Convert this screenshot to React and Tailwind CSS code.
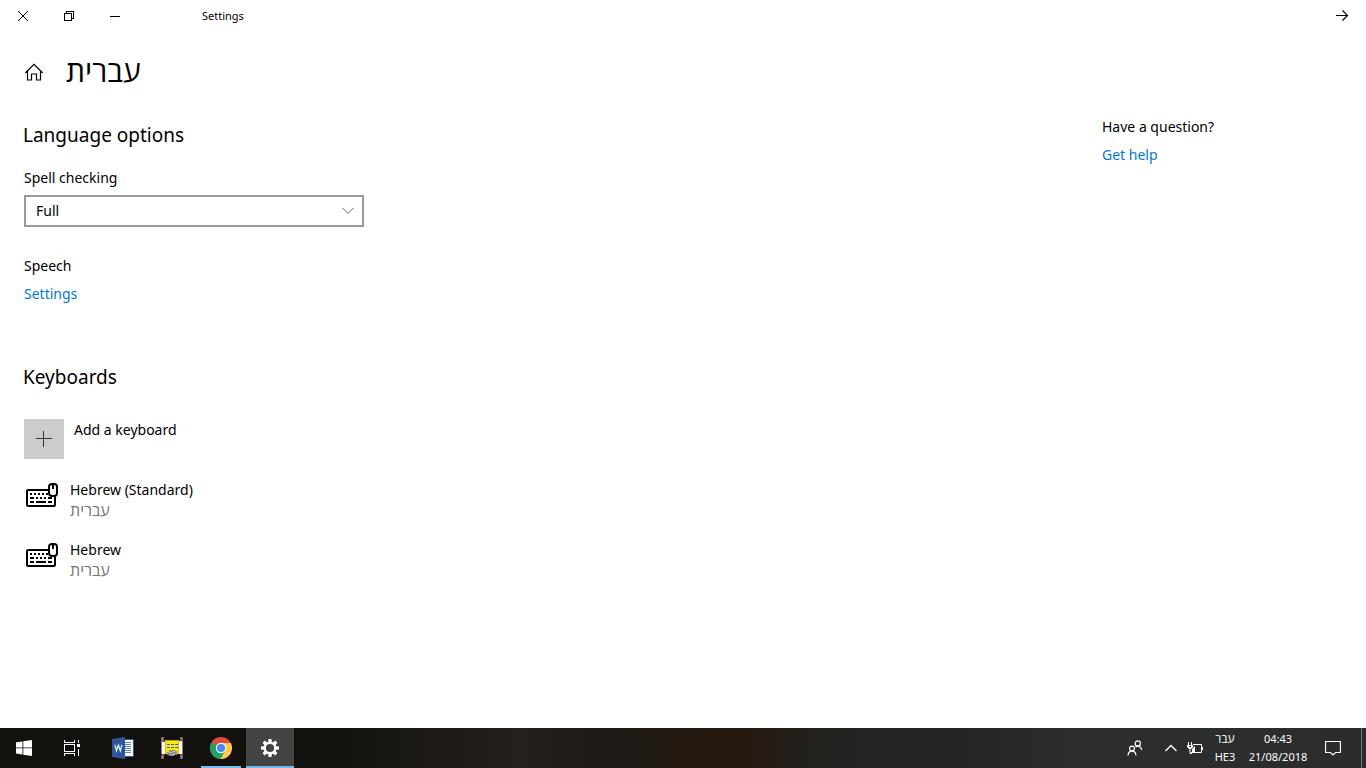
const strings = {
  hebrew: 'עברית',
}

const keyboards = [
  { name: 'Hebrew (Standard)', language: strings.hebrew },
  { name: 'Hebrew', language: strings.hebrew },
]

/* ---------- window icons ---------- */

function CloseIcon() {
  return (
    <svg width="12" height="12" viewBox="0 0 12 12" fill="none" stroke="currentColor">
      <path d="M1 1l10 10M11 1L1 11" />
    </svg>
  )
}

function RestoreIcon() {
  return (
    <svg width="10" height="10" viewBox="0 0 10 10" fill="none" stroke="currentColor" shapeRendering="crispEdges">
      <path d="M.5 2.5h7v7h-7zM2.5 2.5v-2h7v7h-2" />
    </svg>
  )
}

function MinimizeIcon() {
  return (
    <svg width="10" height="10" viewBox="0 0 10 10" fill="none" stroke="currentColor" shapeRendering="crispEdges">
      <path d="M0 5.5h10" />
    </svg>
  )
}

function ArrowIcon() {
  return (
    <svg width="14" height="12" viewBox="0 0 14 12" fill="none" stroke="currentColor" strokeWidth="1.2">
      <path d="M1 5.5h11.500M7.500.5l5 5-5 5" />
    </svg>
  )
}

function HomeIcon() {
  return (
    <svg width="20" height="20" viewBox="0 0 20 20" fill="none" stroke="currentColor" strokeWidth="1.2">
      <path d="M1.3 11L10 2.400l8.700 8.600" />
      <path d="M3.500 9v9h4v-6h5v6h4V9" />
    </svg>
  )
}

function KeyboardIcon() {
  return (
    <svg width="32" height="24" viewBox="0 0 32 24" fill="none" stroke="currentColor" strokeWidth="2">
      <rect x="1" y="7" width="28" height="16" rx="1" />
      <path d="M4 11h18" strokeDasharray="2 2" />
      <path d="M4 15h4M10 15h2M14 15h2M18 15h2M22 15h4M4 19h4M10 19h10M22 19h4" />
      <rect x="23" y="1" width="8" height="12" rx="3" fill="white" />
      <path d="M27 1v5" />
    </svg>
  )
}

/* ---------- taskbar icons ---------- */

function WindowsIcon() {
  return (
    <svg width="16" height="16" viewBox="0 0 16 16" fill="white">
      <path d="M0 2.3l6.5-.9v6.1H0zM7.3 1.3L16 0v7.5H7.3zM0 8.3h6.5v6.2L0 13.6zM7.3 8.3H16V16l-8.7-1.3z" />
    </svg>
  )
}

function TaskViewIcon() {
  return (
    <svg width="16" height="16" viewBox="0 0 16 16" fill="none" stroke="white" shapeRendering="crispEdges">
      <path d="M.5 0v2.5h10V0M.5 16v-2.5h10V16M.5 4.5h10v7H.5zM14.5 0v3M14.5 9v7" />
      <path d="M13 4h3v3h-3z" fill="white" stroke="none" />
    </svg>
  )
}

function WordIcon() {
  return (
    <svg width="22" height="22" viewBox="0 0 22 22">
      <path d="M12 2.500h9.500v17H12z" fill="white" stroke="#2b579a" />
      <path d="M13 5.500h6M13 7.500h6M13 9.500h6M13 11.500h6M13 13.500h6M13 15.500h6" stroke="#5b87c5" />
      <path d="M0 2L13 0v22L0 20z" fill="#2b579a" />
      <path d="M3 7.800l1.500 6 1.900-5.600 1.900 5.600 1.600-6" fill="none" stroke="#e6edf7" strokeWidth="1.300" />
    </svg>
  )
}

function ScrollIcon() {
  return (
    <svg width="24" height="24" viewBox="0 0 24 24" shapeRendering="crispEdges">
      <path d="M5 4h14v14H5z" fill="#f4ee10" />
      <path d="M6 4h12v1H6z" fill="#a79a1c" />
      <path d="M7 8.500h3M11 8.500h3M15 8.500h3M7 11.500h3M11 11.500h3M15 11.500h3" stroke="#55558c" />
      <path d="M2 5h3v13H2zM19 5h3v13h-3z" fill="#f8f8ec" />
      <path d="M5 5h1v13H5zM18 5h1v13h-1z" fill="#c9bc14" />
      <path d="M1 5h1v13H1zM22 5h1v13h-1z" fill="#8d8479" />
      <path d="M2 5.500h3M20 4.500h3M2 18.500h3M20 18.500h3" stroke="#b8323a" />
      <path d="M1 1h3v4H1zM20 1h3v3h-3zM1 19h3v4H1zM20 19h3v4h-3z" fill="#716863" />
      <path d="M2 2h1v2H2zM21 2h1v1h-1zM2 20h1v2H2zM21 20h1v2h-1z" fill="#a39b95" />
      <path d="M9 14h6v1h2v4h-3v1H9v-1H7v-3h2z" fill="#8f8f8f" />
      <path d="M9 16.500h3M13 15.500h2M12 18.500h3" stroke="#bdbdbd" />
    </svg>
  )
}

function ChromeIcon() {
  return (
    <svg width="22" height="22" viewBox="0 0 22 22">
      <circle cx="11" cy="11" r="11" fill="#dd4b3e" />
      <path d="M11 11L1.500 5.500A11 11 0 0 0 10.500 22l5-8.500z" fill="#1da462" />
      <path d="M11 6h9.800A11 11 0 0 1 10.500 22l4.900-8.500z" fill="#ffcd46" />
      <circle cx="11" cy="11" r="5.200" fill="white" />
      <circle cx="11" cy="11" r="4.100" fill="#4688f4" />
    </svg>
  )
}

function GearIcon() {
  const teeth = [0, 45, 90, 135, 180, 225, 270, 315]
  return (
    <svg width="18" height="18" viewBox="0 0 18 18" fill="white">
      {teeth.map((angle) => (
        <path key={angle} d="M7.500 0h3l.5 4H7z" transform={`rotate(${angle} 9 9)`} />
      ))}
      <circle cx="9" cy="9" r="5.200" fill="none" stroke="white" strokeWidth="2.200" />
    </svg>
  )
}

function PeopleIcon() {
  return (
    <svg width="16" height="16" viewBox="0 0 16 16" fill="none" stroke="white" strokeWidth="1.200">
      <circle cx="10.800" cy="3.500" r="2.600" />
      <path d="M8.500 7c2.500-1.800 5.800-.5 6.200 3" />
      <circle cx="5" cy="8.500" r="2.400" />
      <path d="M1 15.500c.4-5.800 7.600-5.800 8 0" />
    </svg>
  )
}

function ChevronUpIcon() {
  return (
    <svg width="12" height="8" viewBox="0 0 12 8" fill="none" stroke="white" strokeWidth="1.300">
      <path d="M.5 7L6 1.500 11.500 7" />
    </svg>
  )
}

function BatteryIcon() {
  return (
    <svg width="16" height="12" viewBox="0 0 16 12" fill="none" stroke="white">
      <path d="M6 2.500h8.500v8H4M15.500 5v3" />
      <path d="M5 9V7l3-3v6H5z" fill="white" stroke="none" />
      <path d="M1.500 0v3M4.500 0v3M3 7v4.500h2" />
      <path d="M0 3h6v2L4 7H2L0 5z" fill="white" stroke="none" />
      <path d="M2 4.500h2" stroke="#2c2d2d" />
    </svg>
  )
}

function ActionCenterIcon() {
  return (
    <svg width="16" height="16" viewBox="0 0 16 16" fill="none" stroke="white" strokeWidth="1.100">
      <path d="M.6 1.500h14.800v11h-4.900L8 15l-2.500-2.500H.6z" />
    </svg>
  )
}

/* ---------- layout ---------- */

function TitleBar() {
  const buttons = [
    { label: 'Close', icon: <CloseIcon /> },
    { label: 'Restore', icon: <RestoreIcon /> },
    { label: 'Minimize', icon: <MinimizeIcon /> },
  ]
  return (
    <div className="h-8 flex items-center shrink-0">
      {buttons.map((b) => (
        <button key={b.label} aria-label={b.label} className="w-[46px] h-8 flex items-center justify-center">
          {b.icon}
        </button>
      ))}
      <span className="pl-16 pt-px text-[11px]">Settings</span>
      <button aria-label="Back" className="ml-auto w-12 h-8 flex items-center justify-center">
        <ArrowIcon />
      </button>
    </div>
  )
}

function KeyboardRow({ name, language }) {
  return (
    <li className="flex gap-3 pl-0.5">
      <div className="pt-[3px]">
        <KeyboardIcon />
      </div>
      <div className="leading-5">
        <div>{name}</div>
        <div className="text-[#767676] text-[16px] leading-5">{language}</div>
      </div>
    </li>
  )
}

function TaskButton({ label, active, running, children }) {
  return (
    <button
      aria-label={label}
      className={`relative w-12 h-10 flex items-center justify-center ${active ? 'bg-[#434343]' : ''}`}
    >
      {children}
      {active && <span className="absolute bottom-0 inset-x-0 h-0.5 bg-[#76b9ed]" />}
      {running && <span className="absolute bottom-0 inset-x-1 h-0.5 bg-[#76b9ed]" />}
    </button>
  )
}

function Taskbar() {
  return (
    <footer className="h-10 shrink-0 flex justify-between text-white text-[11px] leading-[18px] bg-[linear-gradient(90deg,#12110d_0%,#12110d_23%,#24201d_38%,#1e1b17_44%,#26190f_54%,#22221f_60%,#242525_70%,#2c2e2e_80%,#2b2b2b_100%)]">
      <div className="flex">
        <TaskButton label="Start"><WindowsIcon /></TaskButton>
        <TaskButton label="Task View"><TaskViewIcon /></TaskButton>
        <div className="flex gap-px pl-[3px]">
          <TaskButton label="Word"><WordIcon /></TaskButton>
          <TaskButton label="Scroll"><ScrollIcon /></TaskButton>
          <TaskButton label="Chrome" running><ChromeIcon /></TaskButton>
          <TaskButton label="Settings" active><GearIcon /></TaskButton>
        </div>
      </div>
      <div className="flex">
        <button aria-label="People" className="w-12 flex items-center justify-center"><PeopleIcon /></button>
        <button aria-label="Show hidden icons" className="w-6 flex items-center justify-center"><ChevronUpIcon /></button>
        <button aria-label="Battery" className="w-6 flex items-center justify-center"><BatteryIcon /></button>
        <button className="w-9 flex flex-col items-center justify-center">
          <span className="text-[12px] leading-[18px]">עבר</span>
          <span>HE3</span>
        </button>
        <button className="w-[70px] flex flex-col items-center justify-center whitespace-nowrap">
          <span>04:43</span>
          <span>21/08/2018</span>
        </button>
        <button aria-label="Action center" className="w-12 flex items-center justify-center pr-5 pl-3">
          <ActionCenterIcon />
        </button>
        <button aria-label="Show desktop" className="w-[5px] border-l border-[#757575]" />
      </div>
    </footer>
  )
}

export default function App() {
  return (
    <div className="min-h-screen flex flex-col bg-white text-black text-[14px] font-['Segoe_UI','Noto_Sans','Open_Sans','DejaVu_Sans',sans-serif]">
      <TitleBar />

      <header className="flex items-center gap-[22px] pl-6 pt-5">
        <a href="#home" aria-label="Home"><HomeIcon /></a>
        <h1 className="text-[30px] leading-[38px] pb-0.5">{strings.hebrew}</h1>
      </header>

      <main className="flex-1 flex justify-between pl-[23px]">
        <div className="w-[341px]">
          <h2 className="pt-7 text-[19px] leading-[30px]">Language options</h2>

          <div className="pl-px">
            <label htmlFor="spelling" className="block pt-[18px] leading-5">Spell checking</label>
            <div className="relative mt-[7px]">
              <select
                id="spelling"
                className="block w-full h-8 appearance-none border-2 border-[#999999] bg-white pl-2.5 pr-8 pb-0.5 text-[14px]"
              >
                <option>Full</option>
                <option>Basic</option>
                <option>Off</option>
              </select>
              <svg
                className="absolute right-2.5 top-3 pointer-events-none text-[#666666]"
                width="12" height="8" viewBox="0 0 12 8" fill="none" stroke="currentColor"
              >
                <path d="M.5 1L6 6.500 11.500 1" />
              </svg>
            </div>

            <div className="pt-[29px] leading-5">Speech</div>
            <a href="#speech" className="block mt-2 leading-5 text-[#0078d7]">Settings</a>
          </div>

          <h2 className="pt-[58px] text-[19px] leading-[30px]">Keyboards</h2>

          <div className="pl-px">
            <button className="mt-[27px] flex gap-2.5 text-left">
              <span className="w-10 h-10 flex items-center justify-center bg-[#cccccc]">
                <svg width="16" height="16" viewBox="0 0 16 16" stroke="#333333" shapeRendering="crispEdges">
                  <path d="M0 7.500h16M7.500 0v16" />
                </svg>
              </span>
              <span className="pt-px leading-5">Add a keyboard</span>
            </button>

            <ul className="pt-[21px] flex flex-col gap-5">
              {keyboards.map((k) => (
                <KeyboardRow key={k.name} {...k} />
              ))}
            </ul>
          </div>
        </div>

        <aside className="w-[264px] pt-[25px] leading-5">
          <div>Have a question?</div>
          <a href="#help" className="block mt-2 text-[#0078d7]">Get help</a>
        </aside>
      </main>

      <Taskbar />
    </div>
  )
}
